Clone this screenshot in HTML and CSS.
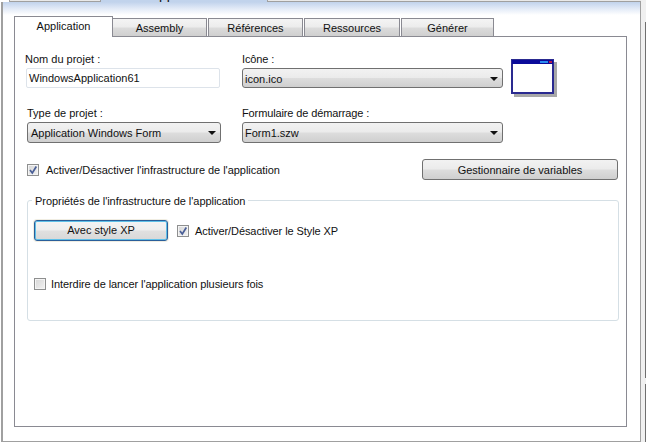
FILE: index.html
```html
<!DOCTYPE html>
<html lang="fr">
<head>
<meta charset="utf-8">
<title>Application</title>
<link rel="stylesheet" href="styles.css">
</head>
<body>
<div class="app">
  <div class="doc">
    <div class="doc-tabs">
      <div class="doc-tab doc-tab-left"></div>
      <div class="doc-tab-active"><span class="doc-title">Application</span></div>
      <div class="doc-tab doc-tab-right"></div>
    </div>
    <div class="doc-body">
      <div class="tabs">
        <div class="tab tab-active">Application</div>
        <div class="tab tab-1">Assembly</div>
        <div class="tab tab-2">Références</div>
        <div class="tab tab-3">Ressources</div>
        <div class="tab tab-4">Générer</div>
      </div>
      <div class="panel">
        <div class="fields">
          <div class="field">
            <label class="label label-name">Nom du projet :</label>
            <div class="input">WindowsApplication61</div>
          </div>
          <div class="field">
            <label class="label label-wide">Icône :</label>
            <div class="select select-wide">icon.ico<span class="arrow"></span></div>
          </div>
          <svg class="winicon" width="46" height="38" viewBox="0 0 46 38">
            <rect x="3" y="3" width="43" height="35" fill="#a8a8a8"/>
            <rect x="1" y="1" width="41" height="33" fill="#fff" stroke="#2a2a90" stroke-width="2"/>
            <rect x="1" y="1" width="41" height="4" fill="#0a0a9a"/>
            <rect x="29" y="2" width="8" height="2" fill="#2a8cf0"/>
            <rect x="38" y="2" width="3" height="2" fill="#b02050"/>
          </svg>
          <div class="field field-type">
            <label class="label">Type de projet :</label>
            <div class="select">Application Windows Form<span class="arrow"></span></div>
          </div>
          <div class="field field-form">
            <label class="label label-wide">Formulaire de démarrage :</label>
            <div class="select select-wide">Form1.szw<span class="arrow"></span></div>
          </div>
        </div>
        <div class="infra-row">
          <div class="check-row">
            <span class="check checked"><svg width="10" height="10" viewBox="0 0 10 10"><path d="M2 5 L4.3 8 L8.3 1.5" fill="none" stroke="#4a5f97" stroke-width="1.7"/></svg></span>
            <span>Activer/Désactiver l'infrastructure de l'application</span>
          </div>
          <div class="button button-vars">Gestionnaire de variables</div>
        </div>
        <fieldset class="group">
          <legend class="legend">Propriétés de l'infrastructure de l'application</legend>
          <div class="xp-row">
            <div class="button button-xp">Avec style XP</div>
            <div class="check-row">
              <span class="check checked"><svg width="10" height="10" viewBox="0 0 10 10"><path d="M2 5 L4.3 8 L8.3 1.5" fill="none" stroke="#4a5f97" stroke-width="1.7"/></svg></span>
              <span>Activer/Désactiver le Style XP</span>
            </div>
          </div>
          <div class="check-row check-single">
            <span class="check"></span>
            <span>Interdire de lancer l'application plusieurs fois</span>
          </div>
        </fieldset>
      </div>
    </div>
  </div>
  <div class="side"></div>
</div>
</body>
</html>
```
FILE: styles.css
```css
* { box-sizing: border-box; }
html, body { margin: 0; padding: 0; background: #fff; }
body {
  width: 646px;
  height: 442px;
  overflow: hidden;
  font-family: "Liberation Sans", Arial, sans-serif;
  font-size: 11px;
  color: #111;
}
.app { display: flex; width: 646px; height: 442px; }
.doc {
  width: 641px;
  height: 442px;
  padding-left: 1px;
  display: flex;
  flex-direction: column;
}
.doc-tabs { display: flex; height: 2px; flex: none; overflow: hidden; background: #fff; }
.doc-tab { height: 2px; background: #e9e9e9; border-bottom: 1px solid #a0a0a0; }
.doc-tab-left { width: 92px; margin-left: 8px; border-left: 1px solid #a0a0a0; border-right: 1px solid #a0a0a0; }
.doc-tab-right { flex: 1; border-left: 1px solid #a0a0a0; }
.doc-tab-active {
  width: 166px;
  height: 2px;
  background: #c1d3ec;
  text-align: center;
  overflow: hidden;
  font-size: 14px;
}
.doc-title { display: block; margin-top: -14px; line-height: 16px; color: #111; }
.doc-body {
  flex: 1;
  min-height: 0;
  border-left: 2px solid #a0a0a0;
  border-right: 1px solid #a0a0a0;
  border-bottom: 1px solid #a0a0a0;
  background: linear-gradient(to bottom, #c1d3ec 0, #dfe8f6 6px, #ffffff 13px);
  padding: 14px 13px 14px 11px;
  display: flex;
  flex-direction: column;
}
.tabs { display: flex; height: 20px; flex: none; align-items: flex-end; }
.tab {
  height: 18px;
  line-height: 17px;
  text-align: center;
  background: linear-gradient(to bottom, #f4f4f4 0, #ececec 48%, #dcdcdc 52%, #cfcfcf 100%);
  border: 1px solid #8a8a92;
  border-bottom: 0;
  margin-right: 1px;
  padding-top: 1px;
}
.tab-active {
  width: 99px;
  height: 21px;
  line-height: 19px;
  background: #fff;
  margin: 0 0 -1px;
  position: relative;
  z-index: 1;
  padding: 0;
}
.tab-1 { width: 94px; border-left: 0; }
.tab-2 { width: 95px; }
.tab-3 { width: 96px; }
.tab-4 { width: 93px; }
.panel {
  flex: 1;
  min-height: 0;
  border: 1px solid #8a8a92;
  background: #fff;
  padding: 15px 8px 0 10px;
}
.fields {
  display: grid;
  grid-template-columns: 217px 261px 46px;
  column-gap: 0;
  grid-template-rows: 46px 36px;
  row-gap: 8px;
  align-items: start;
}
.field { display: flex; flex-direction: column; }
.label { display: block; height: 16px; line-height: 14px; padding-left: 2px; }
.label-name { padding-left: 0; }
.label-wide { padding-left: 0; letter-spacing: -0.12px; }
.input {
  width: 194px;
  height: 20px;
  margin-left: 1px;
  border: 1px solid #dde3ea;
  border-radius: 2px;
  line-height: 18px;
  padding-left: 2px;
}
.select {
  position: relative;
  width: 194px;
  height: 21px;
  margin-left: 2px;
  border: 1px solid #707070;
  border-radius: 3px;
  line-height: 21px;
  padding-left: 3px;
  background: linear-gradient(to bottom, #f2f2f2 0, #ebebeb 48%, #dddddd 52%, #cfcfcf 100%);
}
.select-wide { width: 261px; margin-left: 0; padding-left: 2px; height: 20px; }
.field-form .select-wide { height: 21px; }
.arrow {
  position: absolute;
  right: 4px;
  top: 8px;
  width: 0;
  height: 0;
  border-left: 4px solid transparent;
  border-right: 4px solid transparent;
  border-top: 4px solid #111;
}
.winicon { display: block; margin: 7px 0 0 8px; }
.infra-row {
  display: flex;
  justify-content: space-between;
  align-items: center;
  height: 21px;
  margin-top: 17px;
}
.check-row { display: flex; align-items: center; letter-spacing: -0.08px; }
.infra-row .check-row { margin-left: 2px; letter-spacing: -0.04px; }
.check {
  flex: none;
  width: 12px;
  height: 12px;
  border: 1px solid #8e8f8f;
  background: linear-gradient(135deg, #d6d6d6 0, #f2f2f2 100%);
  box-shadow: inset 0 0 0 1px #f4f4f4;
  margin-right: 7px;
  display: flex;
  align-items: center;
  justify-content: center;
}
.check svg { display: block; }
.button {
  border: 1px solid #707070;
  border-radius: 3px;
  text-align: center;
  background: linear-gradient(to bottom, #f2f2f2 0, #ebebeb 48%, #dddddd 52%, #cfcfcf 100%);
}
.button-vars { width: 196px; height: 21px; line-height: 20px; }
.group {
  width: 592px;
  height: 128px;
  margin: 13px 0 0 2px;
  padding: 0;
  border: 1px solid #d5dfe5;
  border-radius: 3px;
  min-width: 0;
}
.legend { margin-left: 4px; padding: 0 3px; line-height: 16px; height: 14px; letter-spacing: -0.05px; }
.xp-row { display: flex; align-items: center; padding: 13px 0 0 6px; }
.button-xp {
  width: 134px;
  height: 21px;
  line-height: 19px;
  margin-right: 9px;
  border: 1px solid #2a5f9a;
  box-shadow: inset 0 0 0 1px #5fc0e8, 0 0 0 1px #f0ede2;
  background: linear-gradient(to bottom, #f4f4f4 0, #eeeeee 48%, #e0e0e0 52%, #d8d8d8 100%);
}
.xp-row .check { margin-right: 6px; }
.check-single { margin: 37px 0 0 6px; }
.check-single .check { margin-right: 5px; }
.side {
  flex: 1;
  background:
    linear-gradient(to bottom, transparent 22px, #6f6f6f 22px, #6f6f6f 378px, transparent 378px, transparent 384px, #6f6f6f 384px) right top / 1px 100% no-repeat,
    #f0f0f0;
}
```
